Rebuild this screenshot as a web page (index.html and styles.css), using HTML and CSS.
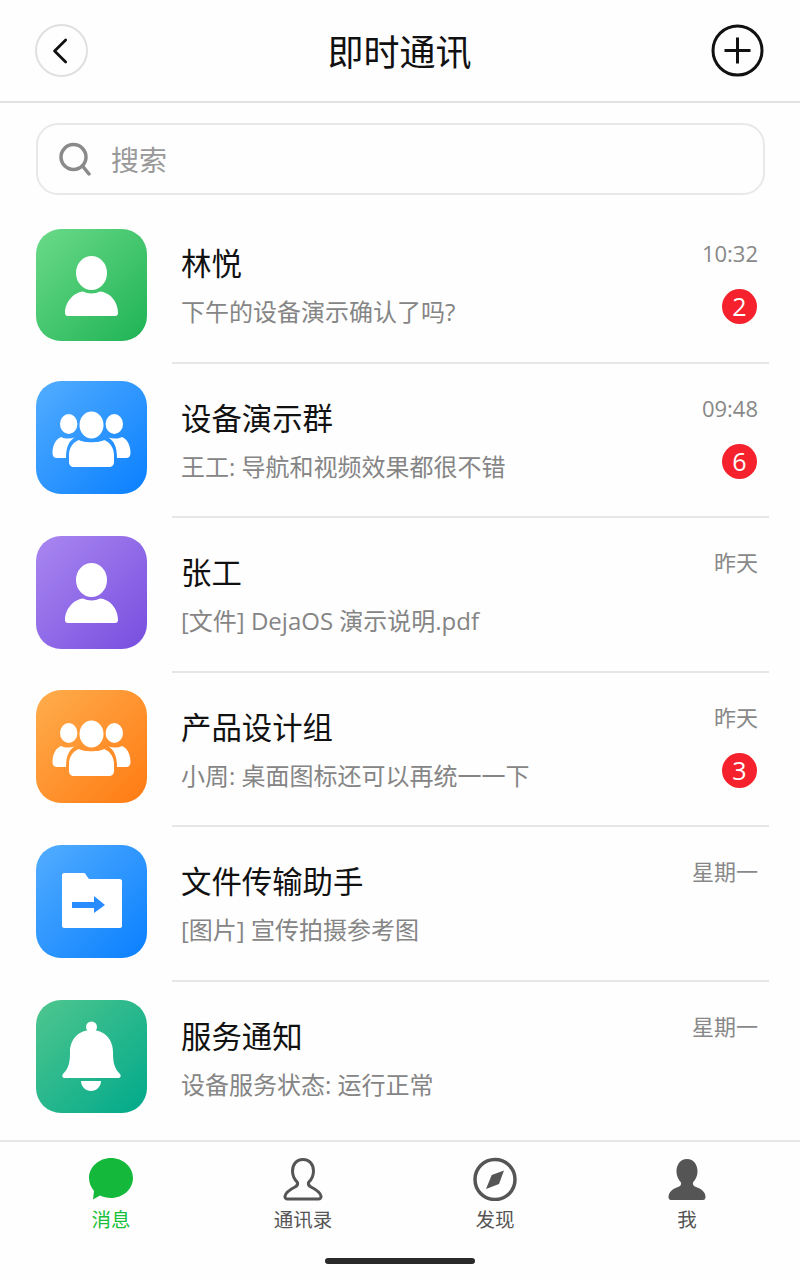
FILE: index.html
```html
<!DOCTYPE html>
<html>

<head>
  <title>即时通讯</title>
  <meta charset="utf-8" name="viewport" content="width=device-width, initial-scale=1" />
  <link rel="stylesheet" href="styles.css">
</head>

<body>

  <!-- icones repetidos -->
  <svg class="sprite" width="0" height="0">
    <symbol id="i-person" viewBox="0 0 111 113">
      <ellipse cx="55.500" cy="44" rx="15.500" ry="17" />
      <path d="M29 84C29 72 39 63 47 62.500C52 65 59 65 64 62.500C73 63 82 72 82 84C82 86 81 87 79 87H32C30 87 29 86 29 84Z" />
    </symbol>
    <symbol id="i-group" viewBox="0 0 111 113">
      <ellipse cx="55.500" cy="44" rx="12" ry="13.500" />
      <ellipse cx="32.700" cy="43" rx="8.700" ry="10" />
      <ellipse cx="78.300" cy="43" rx="8.700" ry="10" />
      <path d="M43 59C47 62 64 62 68 59C74 61 78 67 78 74V81C78 84 76 86 73 86H38C35 86 33 84 33 81V74C33 67 37 61 43 59Z" />
      <path d="M25 56C29 58 34 58 38.500 56.500C33 60 30 66 30 77H21C18 77 16.500 75 16.500 72C16.500 64 20 58 25 56Z" />
      <path d="M86 56C82 58 77 58 72.500 56.500C78 60 81 66 81 77H90C93 77 94.500 75 94.500 72C94.500 64 91 58 86 56Z" />
    </symbol>
  </svg>

  <header class="topbar">
    <button class="round-btn back-btn">
      <svg viewBox="0 0 24 24" width="28" height="28"><path d="M16 2.500L6.500 12L16 21.500" /></svg>
    </button>
    <h1 class="topbar__title">即时通讯</h1>
    <button class="round-btn add-btn">
      <svg viewBox="0 0 53 53" width="53" height="53">
        <circle cx="26.500" cy="26.500" r="24.500" />
        <path d="M26.500 13.500V39.500M13.500 26.500H39.500" />
      </svg>
    </button>
  </header>

  <div class="search">
    <svg class="search__icon" viewBox="0 0 32 34" width="32" height="34">
      <circle cx="14.500" cy="15" r="12.500" />
      <path d="M23.500 24L30 32" />
    </svg>
    <span class="search__text">搜索</span>
  </div>

  <ul class="chats">
    <li class="chat chat--first">
      <div class="avatar avatar--green"><svg width="111" height="113"><use href="#i-person" /></svg></div>
      <div class="chat__body">
        <div class="chat__text">
          <div class="chat__name">林悦</div>
          <div class="chat__last">下午的设备演示确认了吗?</div>
        </div>
        <div class="chat__meta">
          <span class="chat__time">10:32</span>
          <span class="badge">2</span>
        </div>
      </div>
    </li>
    <li class="chat">
      <div class="avatar avatar--blue"><svg width="111" height="113"><use href="#i-group" /></svg></div>
      <div class="chat__body">
        <div class="chat__text">
          <div class="chat__name">设备演示群</div>
          <div class="chat__last">王工: 导航和视频效果都很不错</div>
        </div>
        <div class="chat__meta">
          <span class="chat__time">09:48</span>
          <span class="badge">6</span>
        </div>
      </div>
    </li>
    <li class="chat">
      <div class="avatar avatar--purple"><svg width="111" height="113"><use href="#i-person" /></svg></div>
      <div class="chat__body">
        <div class="chat__text">
          <div class="chat__name">张工</div>
          <div class="chat__last">[文件] DejaOS 演示说明.pdf</div>
        </div>
        <div class="chat__meta">
          <span class="chat__time">昨天</span>
        </div>
      </div>
    </li>
    <li class="chat">
      <div class="avatar avatar--orange"><svg width="111" height="113"><use href="#i-group" /></svg></div>
      <div class="chat__body">
        <div class="chat__text">
          <div class="chat__name">产品设计组</div>
          <div class="chat__last">小周: 桌面图标还可以再统一一下</div>
        </div>
        <div class="chat__meta">
          <span class="chat__time">昨天</span>
          <span class="badge">3</span>
        </div>
      </div>
    </li>
    <li class="chat">
      <div class="avatar avatar--blue">
        <svg width="111" height="113" viewBox="0 0 111 113">
          <path d="M26 30C26 29 27 28 28 28H48C49 28 50 29 50 30L53 34H84C85 34 86 35 86 36V81C86 82 85 83 84 83H28C27 83 26 82 26 81Z" />
          <path class="folder-arrow" d="M36 57H58V51L69 60L58 68V63H36Z" />
        </svg>
      </div>
      <div class="chat__body">
        <div class="chat__text">
          <div class="chat__name">文件传输助手</div>
          <div class="chat__last">[图片] 宣传拍摄参考图</div>
        </div>
        <div class="chat__meta">
          <span class="chat__time">星期一</span>
        </div>
      </div>
    </li>
    <li class="chat chat--last">
      <div class="avatar avatar--teal">
        <svg width="111" height="113" viewBox="0 0 111 113">
          <circle cx="55.500" cy="27" r="5.500" />
          <path d="M55.500 30C42 30 34 40 34 52C34 62 33 68 27 74C25.500 76 26.500 78 29 78H82C84.500 78 85.500 76 84 74C78 68 77 62 77 52C77 40 69 30 55.500 30Z" />
          <path d="M45 81H65C65 87 60 91 55 91C50 91 45 87 45 81Z" />
        </svg>
      </div>
      <div class="chat__body">
        <div class="chat__text">
          <div class="chat__name">服务通知</div>
          <div class="chat__last">设备服务状态: 运行正常</div>
        </div>
        <div class="chat__meta">
          <span class="chat__time">星期一</span>
        </div>
      </div>
    </li>
  </ul>

  <nav class="tabs">
    <a class="tab tab--on">
      <svg viewBox="0 0 46 44" width="46" height="44">
        <path d="M23 1C35 1 45 10 45 21C45 32 35 41 23 41C19 41 15 40 12 38.500L5 42.500L6 34C3 30 1 26 1 21C1 10 11 1 23 1Z" />
      </svg>
      <span>消息</span>
    </a>
    <a class="tab">
      <svg viewBox="0 0 46 44" width="46" height="44" class="tab__line">
        <path d="M23 2.500C30 2.500 33.500 8 33.500 14C33.500 19 31 23 28.500 25.500C28 27.500 29 29 31 30C36 32.500 40 35 41 39C41.300 41 40 42 38.500 42H7.500C6 42 4.700 41 5 39C6 35 10 32.500 15 30C17 29 18 27.500 17.500 25.500C15 23 12.500 19 12.500 14C12.500 8 16 2.500 23 2.500Z" />
      </svg>
      <span>通讯录</span>
    </a>
    <a class="tab">
      <svg viewBox="0 0 46 44" width="46" height="44">
        <circle class="tab__ring" cx="23" cy="22.500" r="20" />
        <path d="M32 13.500L27 27L14 32L19.700 18Z" />
      </svg>
      <span>发现</span>
    </a>
    <a class="tab">
      <svg viewBox="0 0 46 44" width="46" height="44">
        <path d="M23 2C30 2 33.500 8 33.500 14.500C33.500 19.500 31 23 29 25.500C28.500 27.500 29.500 29 32 30C37 31.500 41.500 35 41.500 40C41.500 42 40.500 43 39 43H7C5.500 43 4.500 42 4.500 40C4.500 35 9 31.500 14 30C16.500 29 17.500 27.500 17 25.500C15 23 12.500 19.500 12.500 14.500C12.500 8 16 2 23 2Z" />
      </svg>
      <span>我</span>
    </a>
  </nav>

  <div class="home-bar"></div>

</body>

</html>
```

FILE: styles.css
```css
/* Tela de mensagens */
html, body {
  margin: 0;
  padding: 0;
}

body {
  width: 800px;
  height: 1280px;
  overflow: hidden;
  background-color: #fefefe;
  color: #111;
  font-family: "Open Sans", "Noto Sans CJK SC", sans-serif;
}

.sprite {
  display: block;
  height: 0;
}

/* Barra de cima */
.topbar {
  display: flex;
  align-items: center;
  justify-content: space-between;
  height: 101px;
  padding: 0 36px 0 35px;
  border-bottom: 2px solid #e2e2e2;
  box-sizing: content-box;
}

.topbar__title {
  margin: 0;
  padding-top: 4px;
  font-size: 36px;
  font-weight: 400;
  line-height: 1;
  color: #111;
}

.round-btn {
  display: flex;
  align-items: center;
  justify-content: center;
  width: 53px;
  height: 53px;
  padding: 0;
  border: 0;
  border-radius: 50%;
  background: none;
}

.back-btn {
  border: 2px solid #e0e0e0;
  box-sizing: border-box;
}

.back-btn svg {
  margin-left: -2px;
}

.back-btn path {
  fill: none;
  stroke: #111;
  stroke-width: 2.400;
  stroke-linecap: round;
  stroke-linejoin: round;
}

.add-btn circle,
.add-btn path {
  fill: none;
  stroke: #111;
  stroke-width: 3;
}

/* Busca */
.search {
  display: flex;
  align-items: center;
  gap: 20px;
  height: 72px;
  margin: 20px 35px 14px 36px;
  padding-left: 21px;
  border: 2px solid #e8e8e8;
  border-radius: 22px;
  box-sizing: border-box;
}

.search__icon circle,
.search__icon path {
  fill: none;
  stroke: #8a8a8a;
  stroke-width: 3.500;
  stroke-linecap: round;
}

.search__text {
  font-size: 28px;
  color: #999;
}

/* Lista */
.chats {
  margin: 0;
  padding: 0;
  list-style: none;
}

.chat {
  display: flex;
  height: 154.500px;
  padding-left: 36px;
  padding-right: 31px;
}

.avatar {
  flex: none;
  width: 111px;
  height: 113px;
  margin-top: 17.500px;
  border-radius: 25px;
  fill: #fff;
}

.chat--first .avatar {
  height: 112px;
  margin-top: 20px;
}

.chat--last .avatar {
  margin-top: 18.500px;
}

.avatar svg {
  display: block;
}

.avatar--green {
  background: linear-gradient(135deg, #6bda88, #1fb356);
}

.avatar--blue {
  background: linear-gradient(135deg, #52adff, #0a7fff);
}

.avatar--purple {
  background: linear-gradient(135deg, #a987f0, #774edf);
}

.avatar--orange {
  background: linear-gradient(135deg, #ffad4d, #ff7a12);
}

.avatar--teal {
  background: linear-gradient(135deg, #4fc68e, #00a98b);
}

.folder-arrow {
  fill: #2a8cff;
}

.chat__body {
  flex: 1;
  display: flex;
  justify-content: space-between;
  margin-left: 25px;
  padding: 0 11px 0 9px;
  border-bottom: 2px solid #e6e6e6;
}

.chat--last .chat__body {
  border-bottom: 0;
}

.chat__name {
  margin-top: 35px;
  font-size: 30.400px;
  line-height: 40px;
  color: #111;
}

.chat__last {
  margin-top: 8px;
  font-size: 24px;
  line-height: 40px;
  color: #858585;
}

.chat__meta {
  display: flex;
  flex-direction: column;
  align-items: flex-end;
}

.chat__time {
  margin-top: 26px;
  font-size: 22px;
  line-height: 36px;
  color: #888;
}

.badge {
  display: flex;
  align-items: center;
  justify-content: center;
  width: 35px;
  height: 35px;
  margin-top: 18px;
  margin-right: 1px;
  border-radius: 50%;
  background-color: #f5222d;
  color: #fff;
  font-size: 25px;
  line-height: 1;
}

/* Abas */
.tabs {
  display: flex;
  height: 116px;
  margin-top: 4px;
  padding: 0 17px 0 15px;
  border-top: 2px solid #e6e6e6;
}

.tab {
  flex: 1;
  display: flex;
  flex-direction: column;
  align-items: center;
  padding-top: 15px;
  font-size: 19.500px;
  line-height: 28px;
  color: #555;
  fill: #555;
}

.tab svg {
  display: block;
  margin-bottom: 5px;
}

.tab--on {
  color: #17c03a;
  fill: #14b83a;
}

.tab__line path {
  fill: none;
  stroke: #555;
  stroke-width: 3;
}

.tab__ring {
  fill: none;
  stroke: #555;
  stroke-width: 3.500;
}

.home-bar {
  width: 150px;
  height: 6px;
  margin: 0 auto;
  border-radius: 3px;
  background-color: #2a2a2a;
}
```
